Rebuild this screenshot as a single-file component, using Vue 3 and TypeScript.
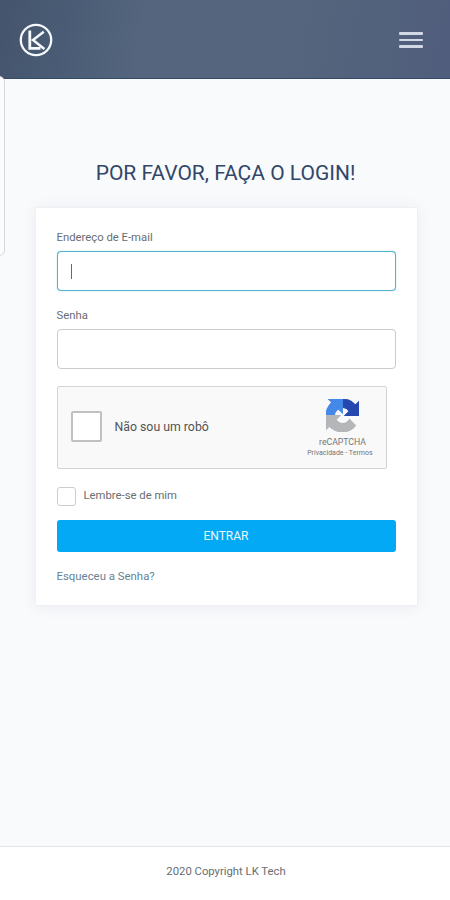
<script setup lang="ts">
import { ref } from 'vue'

const email = ref('')
const password = ref('')
const human = ref(false)
const remember = ref(false)
</script>

<template>
  <div class="page">
    <header class="topbar">
      <svg class="logo" viewBox="0 0 34 34" fill="none" stroke="#f6f9fc">
        <circle cx="17" cy="17" r="15.2" stroke-width="2.3" />
        <path d="M10.8 7.5V25.3H21.5" stroke-width="2.8" />
        <path d="M24.8 8.8L14 17.1L25.4 26" stroke-width="2.5" />
      </svg>
      <button class="menu" type="button" aria-label="Menu">
        <span></span><span></span><span></span>
      </button>
    </header>
    <div class="edge-panel"></div>

    <main class="content">
      <h1 class="title">POR FAVOR, FAÇA O LOGIN!</h1>
      <form class="card" @submit.prevent>
        <label class="label" for="email">Endereço de E-mail</label>
        <div class="field focused">
          <span v-if="!email" class="caret"></span>
          <input id="email" v-model="email" type="email" />
        </div>
        <label class="label second" for="password">Senha</label>
        <div class="field">
          <input id="password" v-model="password" type="password" />
        </div>

        <div class="captcha">
          <input v-model="human" class="human-check" type="checkbox" aria-label="Não sou um robô" />
          <span class="human-text">Não sou um robô</span>
          <div class="brand">
            <svg class="brand-icon" viewBox="0 0 64 64" stroke-width="2">
              <path fill="#2448ae" stroke="#2448ae" d="M64 31.955l-.033-1.37V4.687l-7.16 7.16C50.948 4.674 42.033.093 32.05.093c-10.4 0-19.622 4.96-25.458 12.64l11.736 11.86a15.55 15.55 0 0 1 4.754-5.334c2.05-1.6 4.952-2.906 8.968-2.906.485 0 .86.057 1.135.163 4.976.393 9.288 3.14 11.828 7.124l-8.307 8.307L64 31.953" />
              <path fill="#4489e8" stroke="#4489e8" d="M31.862.094l-1.37.033H4.594l7.16 7.16C4.58 13.147 0 22.06 0 32.046c0 10.4 4.96 19.622 12.64 25.458L24.5 45.768a15.55 15.55 0 0 1-5.334-4.754c-1.6-2.05-2.906-4.952-2.906-8.968 0-.485.057-.86.163-1.135.393-4.976 3.14-9.288 7.124-11.828l8.307 8.307L31.86.095" />
              <path fill="#b5b6b8" stroke="#b5b6b8" d="M.001 32.045l.033 1.37v25.898l7.16-7.16c5.86 7.173 14.774 11.754 24.76 11.754 10.4 0 19.622-4.96 25.458-12.64l-11.736-11.86a15.55 15.55 0 0 1-4.754 5.334c-2.05 1.6-4.952 2.906-8.968 2.906-.485 0-.86-.057-1.135-.163-4.976-.393-9.288-3.14-11.828-7.124l8.307-8.307c-10.522.04-22.4.066-27.295-.005" />
            </svg>
            <span class="brand-name">reCAPTCHA</span>
            <span class="brand-links">Privacidade - Termos</span>
          </div>
        </div>

        <label class="remember">
          <input v-model="remember" type="checkbox" />
          <span>Lembre-se de mim</span>
        </label>
        <button class="submit" type="submit">ENTRAR</button>
        <a class="forgot" href="#">Esqueceu a Senha?</a>
      </form>
    </main>

    <footer class="footer">2020 Copyright LK Tech</footer>
  </div>
</template>

<style>
body {
  margin: 0;
}
</style>

<style scoped>
.page {
  position: relative;
  display: flex;
  flex-direction: column;
  height: 900px;
  overflow: hidden;
  background: #f8fafc;
  font-family: Roboto, "Liberation Sans", sans-serif;
  color: #686d72;
}
.page *,
.page {
  box-sizing: border-box;
}
.topbar {
  flex: none;
  display: flex;
  align-items: center;
  justify-content: space-between;
  height: 79px;
  padding: 0 27px 0 19px;
  border-bottom: 1px solid #344a68;
  background: linear-gradient(100deg, #44546c 0%, #4a5c75 15%, #54657d 32%, #54657d 65%, #52617c 85%, #505d7d 100%);
}
.logo {
  width: 34px;
  height: 34px;
  margin-top: 2px;
}
.menu {
  display: flex;
  flex-direction: column;
  gap: 4px;
  width: 24px;
  margin-top: 2px;
  padding: 0;
  border: 0;
  background: none;
}
.menu span {
  height: 2.6px;
  border-radius: 1px;
  background: #d2d9e4;
}
.edge-panel {
  position: absolute;
  top: 76px;
  left: -10px;
  width: 15px;
  height: 180px;
  border: 1px solid #d6d7dc;
  border-radius: 6px;
  background: #fcfcfd;
}
.content {
  flex: 1;
  display: flex;
  flex-direction: column;
}
.title {
  margin: 80px 0 0 1px;
  height: 28px;
  line-height: 28px;
  text-align: center;
  font-size: 21px;
  font-weight: 400;
  white-space: nowrap;
  color: #32466a;
}
.card {
  display: flex;
  flex-direction: column;
  align-items: flex-start;
  width: 383px;
  height: 399px;
  margin: 20px 0 0 35px;
  padding: 22px 20.5px 0;
  border: 1px solid #eff0f2;
  background: #fff;
  box-shadow: 0 1px 14px rgba(50, 60, 80, 0.07);
}
.label {
  height: 16px;
  line-height: 16px;
  font-size: 11.3px;
}
.second {
  margin-top: 17px;
}
.field {
  display: flex;
  align-items: center;
  width: 339px;
  height: 40px;
  margin-top: 5px;
  padding: 0 13px;
  border: 1px solid #c9cbcd;
  border-radius: 4px;
  background: #fff;
}
.focused {
  border: 1.5px solid #54b3cf;
  box-shadow: 0 0 1px #54b3cf;
}
.caret {
  width: 1px;
  height: 15px;
  background: #66696c;
}
.field input {
  flex: 1;
  min-width: 0;
  border: 0;
  padding: 0;
  outline: 0;
  font: 13px Roboto, sans-serif;
  background: transparent;
}
.captcha {
  display: flex;
  align-items: center;
  width: 330px;
  height: 83px;
  margin-top: 17px;
  padding-left: 13px;
  border: 1.5px solid #d4d4d5;
  border-radius: 2px;
  background: #f9f9f9;
}
.human-check {
  appearance: none;
  width: 31px;
  height: 31px;
  margin: 0 0 2px;
  border: 2px solid #bfc0c1;
  border-radius: 2px;
  background: #fff;
}
.human-text {
  margin: 0 0 2px 13px;
  font-size: 12.3px;
  color: #515355;
}
.brand {
  display: flex;
  flex-direction: column;
  align-items: center;
  width: 60px;
  margin: 2px 13px 0 auto;
  white-space: nowrap;
}
.brand-icon {
  width: 33px;
  height: 33px;
}
.brand-name {
  margin-top: 5px;
  font-size: 8.7px;
  line-height: 11px;
  color: #737476;
}
.brand-links {
  align-self: flex-end;
  font-size: 7px;
  line-height: 10px;
  color: #737476;
}
.remember {
  display: flex;
  align-items: center;
  height: 20px;
  margin-top: 17px;
  font-size: 11.3px;
}
.remember input {
  appearance: none;
  width: 19px;
  height: 19px;
  margin: 1px 8px 0 0;
  border: 1px solid #cbcdce;
  border-radius: 3px;
  background: #fff;
}
.remember span {
  margin-bottom: 2px;
}
.submit {
  width: 339px;
  height: 32px;
  margin-top: 14px;
  padding: 0;
  border: 0;
  border-radius: 3px;
  background: #04a9f5;
  color: #e9f8ff;
  font: 12px Roboto, sans-serif;
}
.forgot {
  margin-top: 16px;
  line-height: 16px;
  font-size: 11.4px;
  text-decoration: none;
  color: #648394;
}
.footer {
  flex: none;
  height: 54px;
  padding-left: 2px;
  border-top: 1px solid #e5e7e9;
  background: #fff;
  text-align: center;
  line-height: 49px;
  font-size: 11.3px;
}
</style>
